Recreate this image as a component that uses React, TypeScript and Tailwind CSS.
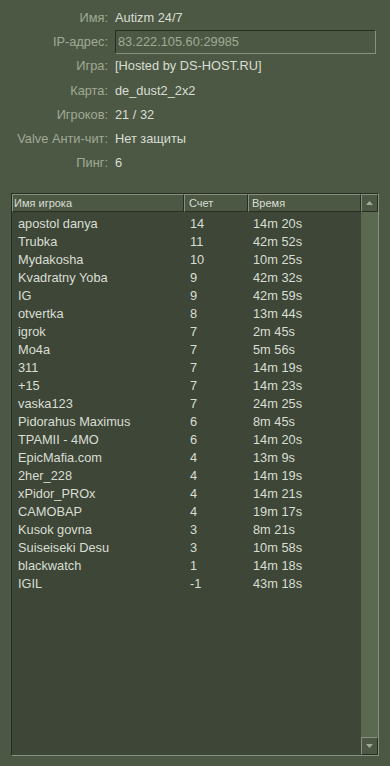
import React from "react";

const players: [string, string, string][] = [
  ["apostol danya", "14", "14m 20s"],
  ["Trubka", "11", "42m 52s"],
  ["Mydakosha", "10", "10m 25s"],
  ["Kvadratny Yoba", "9", "42m 32s"],
  ["IG", "9", "42m 59s"],
  ["otvertka", "8", "13m 44s"],
  ["igrok", "7", "2m 45s"],
  ["Mo4a", "7", "5m 56s"],
  ["311", "7", "14m 19s"],
  ["+15", "7", "14m 23s"],
  ["vaska123", "7", "24m 25s"],
  ["Pidorahus Maximus", "6", "8m 45s"],
  ["TPAMII - 4MO", "6", "14m 20s"],
  ["EpicMafia.com", "4", "13m 9s"],
  ["2her_228", "4", "14m 19s"],
  ["xPidor_PROx", "4", "14m 21s"],
  ["CAMOBAP", "4", "19m 17s"],
  ["Kusok govna", "3", "8m 21s"],
  ["Suiseiseki Desu", "3", "10m 58s"],
  ["blackwatch", "1", "14m 18s"],
  ["IGIL", "-1", "43m 18s"],
];

function Label({ children }: { children: React.ReactNode }) {
  return <div className="w-[108px] text-right text-[#a0aa95] whitespace-nowrap">{children}</div>;
}

export default function App() {
  return (
    <div className="w-[390px] h-[766px] bg-[#4c5844] overflow-hidden text-[12.8px] leading-none text-[#d8ded3] font-['Liberation_Sans',Arial,sans-serif]">
      <div className="pt-[7px] flex flex-col">
        <div className="h-[23px] flex items-center gap-[7px]">
          <Label>Имя:</Label>
          <div>Autizm 24/7</div>
        </div>
        <div className="h-[24px] flex items-center gap-[7px]">
          <Label>IP-адрес:</Label>
          <div className="w-[261px] h-[24px] border-t border-l border-t-[#282e22] border-l-[#282e22] border-b border-r border-b-[#889180] border-r-[#889180] flex items-center pl-[2px] text-[#a0aa95]">
            83.222.105.60:29985
          </div>
        </div>
        <div className="h-[25px] flex items-center gap-[7px]">
          <Label>Игра:</Label>
          <div>[Hosted by DS-HOST.RU]</div>
        </div>
        <div className="h-[24px] flex items-center gap-[7px]">
          <Label>Карта:</Label>
          <div>de_dust2_2x2</div>
        </div>
        <div className="h-[24px] flex items-center gap-[7px]">
          <Label>Игроков:</Label>
          <div>21 / 32</div>
        </div>
        <div className="h-[24px] flex items-center gap-[7px]">
          <Label>Valve Анти-чит:</Label>
          <div>Нет защиты</div>
        </div>
        <div className="h-[24px] flex items-center gap-[7px]">
          <Label>Пинг:</Label>
          <div>6</div>
        </div>
      </div>

      <div className="mt-[18px] ml-[11px] w-[368px] h-[563px] border-t border-l border-t-[#282e22] border-l-[#282e22] border-b border-r border-b-[#889180] border-r-[#889180] flex">
        <div className="flex-1 flex flex-col bg-[#3e4637]">
          <div className="h-[18px] flex bg-[#4c5844] text-[11px]">
            <div className="w-[172px] h-full border-t border-l border-t-[#889180] border-l-[#889180] border-b border-r border-b-[#282e22] border-r-[#282e22] flex items-center pl-[1px] pt-[1px]">
              Имя игрока
            </div>
            <div className="w-[64px] h-full border-t border-l border-t-[#889180] border-l-[#889180] border-b border-r border-b-[#282e22] border-r-[#282e22] flex items-center pl-[4px] pt-[1px]">
              Счет
            </div>
            <div className="w-[113px] h-full border-t border-l border-t-[#889180] border-l-[#889180] border-b border-r border-b-[#282e22] border-r-[#282e22] flex items-center pl-[3px] pt-[1px]">
              Время
            </div>
          </div>
          <div className="pt-[3px] flex flex-col">
            {players.map(([n, s, t], i) => (
              <div key={i} className="h-[18px] flex items-center">
                <div className="w-[172px] pl-[6px] whitespace-nowrap">{n}</div>
                <div className="w-[64px] pl-[6px]">{s}</div>
                <div className="w-[113px] pl-[5px] whitespace-nowrap">{t}</div>
              </div>
            ))}
          </div>
        </div>
        <div className="w-[17px] flex flex-col bg-[#5a6a50]">
          <div className="h-[18px] bg-[#4c5844] border-t border-l border-t-[#889180] border-l-[#889180] border-b border-r border-b-[#282e22] border-r-[#282e22] flex items-center justify-center">
            <svg width="7" height="4" viewBox="0 0 7 4"><path d="M3.5 0 L7 4 L0 4 Z" fill="#a0aa95" /></svg>
          </div>
          <div className="flex-1" />
          <div className="h-[18px] bg-[#4c5844] border-t border-l border-t-[#889180] border-l-[#889180] border-b border-r border-b-[#282e22] border-r-[#282e22] flex items-center justify-center">
            <svg width="7" height="4" viewBox="0 0 7 4"><path d="M0 0 L7 0 L3.5 4 Z" fill="#a0aa95" /></svg>
          </div>
        </div>
      </div>
    </div>
  );
}
